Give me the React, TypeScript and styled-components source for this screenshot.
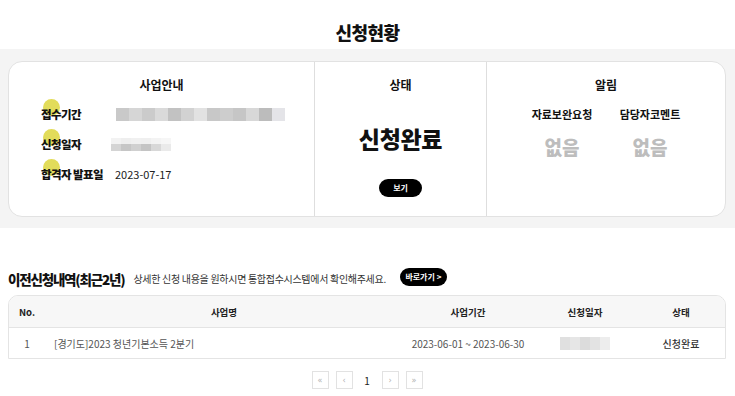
import styled, { createGlobalStyle } from "styled-components";

const GlobalStyle = createGlobalStyle`
	body {
		margin: 0;
		background: #fff;
		font-family: "Noto Sans CJK KR", "Noto Sans", sans-serif;
		color: #111;
	}
`;

const Page = styled.div`
	width: 735px;
	display: flex;
	flex-direction: column;
`;

const PageTitle = styled.h1`
	margin: 0;
	padding-top: 19px;
	height: 30px;
	text-align: center;
	font-size: 18px;
	font-weight: 800;
	line-height: 26px;
	letter-spacing: -0.5px;
`;

const Band = styled.div`
	background: #f4f4f4;
	padding: 12px 9px 11px 8px;
`;

const Card = styled.div`
	background: #fff;
	border: 1px solid #e2e2e2;
	border-radius: 14px;
	height: 154px;
	display: grid;
	grid-template-columns: 305px 172px 1fr;
`;

const Column = styled.div<{ $divider?: boolean }>`
	display: flex;
	flex-direction: column;
	align-items: center;
	padding-top: 14px;
	border-left: ${(p) => (p.$divider ? "1px solid #dedede" : "none")};
`;

const ColTitle = styled.div`
	font-size: 12px;
	font-weight: 700;
	line-height: 18px;
`;

const InfoList = styled.div`
	align-self: stretch;
	display: flex;
	flex-direction: column;
	gap: 12px;
	padding: 11px 0 0 32px;
`;

const InfoRow = styled.div`
	display: flex;
	align-items: center;
	height: 18px;
`;

const InfoLabel = styled.div`
	position: relative;
	width: 74px;
	font-size: 11.5px;
	font-weight: 800;
	line-height: 18px;
	letter-spacing: -0.6px;
	&::before {
		content: "";
		position: absolute;
		left: 2px;
		top: -6px;
		width: 17px;
		height: 17px;
		border-radius: 50%;
		background: #e2dc5a;
		z-index: 0;
	}
	span {
		position: relative;
		z-index: 1;
	}
`;

const InfoValue = styled.div`
	font-size: 11px;
	line-height: 18px;
	color: #222;
`;

const Mosaic = styled.div<{ $offset?: number }>`
	display: flex;
	flex-direction: column;
	margin-left: ${(p) => p.$offset ?? 0}px;
`;

const MosaicLine = styled.div`
	display: flex;
`;

const MosaicCell = styled.div<{ $w: number; $h: number; $c: string }>`
	width: ${(p) => p.$w}px;
	height: ${(p) => p.$h}px;
	background: ${(p) => p.$c};
`;

const BigStatus = styled.div`
	margin-top: 28px;
	font-size: 23px;
	font-weight: 800;
	line-height: 32px;
	letter-spacing: -0.3px;
`;

const PillButton = styled.button<{ $w: number }>`
	width: ${(p) => p.$w}px;
	height: 18px;
	border: none;
	border-radius: 9px;
	background: #000;
	color: #fff;
	font-family: inherit;
	font-size: 8px;
	font-weight: 700;
	padding: 0;
	line-height: 18px;
	cursor: pointer;
`;

const ViewButton = styled(PillButton)`
	margin-top: 25px;
`;

const NoticeGrid = styled.div`
	margin-top: 12px;
	display: grid;
	grid-template-columns: 88px 88px;
	justify-items: center;
	row-gap: 12px;
`;

const NoticeLabel = styled.div`
	font-size: 11px;
	font-weight: 700;
	line-height: 16px;
`;

const NoticeValue = styled.div`
	font-size: 19px;
	font-weight: 800;
	color: #bdbdbd;
	line-height: 26px;
`;

const History = styled.div`
	padding: 41px 9px 0 8px;
	display: flex;
	flex-direction: column;
`;

const HistoryHead = styled.div`
	display: flex;
	align-items: center;
	height: 20px;
`;

const HistoryTitle = styled.div`
	font-size: 13.5px;
	font-weight: 800;
	line-height: 20px;
	letter-spacing: -1.2px;
`;

const HistoryDesc = styled.div`
	margin-left: 9px;
	font-size: 10px;
	color: #333;
	line-height: 20px;
	letter-spacing: -0.3px;
`;

const GoButton = styled(PillButton)`
	margin-left: 14px;
	margin-top: -4px;
`;

const Table = styled.div`
	margin-top: 6px;
	border: 1px solid #e4e4e4;
	border-radius: 10px 10px 0 0;
	overflow: hidden;
`;

const TRow = styled.div<{ $head?: boolean }>`
	display: grid;
	grid-template-columns: 36px 358px 130px 104px 1fr;
	height: ${(p) => (p.$head ? 31 : 30)}px;
	align-items: center;
	background: ${(p) => (p.$head ? "#f7f7f7" : "#fff")};
	border-bottom: ${(p) => (p.$head ? "1px solid #e4e4e4" : "none")};
	font-size: ${(p) => (p.$head ? 9.5 : 10)}px;
	font-weight: ${(p) => (p.$head ? 700 : 400)};
	color: ${(p) => (p.$head ? "#222" : "#555")};
`;

const Cell = styled.div<{ $align?: "left" | "center"; $pad?: number; $strong?: boolean }>`
	display: flex;
	justify-content: ${(p) => (p.$align === "left" ? "flex-start" : "center")};
	padding-left: ${(p) => p.$pad ?? 0}px;
	font-weight: ${(p) => (p.$strong ? 500 : "inherit")};
	color: ${(p) => (p.$strong ? "#333" : "inherit")};
`;

const Pager = styled.div`
	display: flex;
	justify-content: center;
	align-items: center;
	gap: 7px;
	margin-top: 12px;
`;

const PageBox = styled.div`
	width: 15px;
	height: 16px;
	border: 1px solid #e2e2e2;
	display: flex;
	align-items: center;
	justify-content: center;
	font-size: 8px;
	color: #b0b0b0;
	font-family: "DejaVu Sans", sans-serif;
`;

const PageNum = styled.div`
	width: 15px;
	text-align: center;
	font-size: 10px;
	color: #222;
`;

const periodShades = ["#c9c9c9", "#d6d6d6", "#cbcbcb", "#dadada", "#c2c2c2", "#d2d2d2", "#e2e2e2", "#c8c8c8", "#cdcdcd", "#c6c6c6", "#d8d8d8", "#bcbcbc", "#e4e4e8"];
const dateTop = ["#f2f2f2", "#eeeeee", "#f0f0f0", "#efefef", "#f3f3f3", "#f6f6f6"];
const dateBottom = ["#d4d4d4", "#c6c6c6", "#d0d0d0", "#c4c4c4", "#d8d8d8", "#eaeaea"];
const rowShades = ["#e0e0e0", "#e6e6e6", "#dcdcdc", "#e3e3e3", "#ededed"];

function App() {
	return (
		<Page>
			<GlobalStyle />
			<PageTitle>신청현황</PageTitle>
			<Band>
				<Card>
					<Column>
						<ColTitle>사업안내</ColTitle>
						<InfoList>
							<InfoRow>
								<InfoLabel><span>접수기간</span></InfoLabel>
								<Mosaic $offset={1}>
									<MosaicLine>
										{periodShades.map((c, i) => (
											<MosaicCell key={i} $w={13} $h={13} $c={c} />
										))}
									</MosaicLine>
								</Mosaic>
							</InfoRow>
							<InfoRow>
								<InfoLabel><span>신청일자</span></InfoLabel>
								<Mosaic $offset={-4}>
									<MosaicLine>
										{dateTop.map((c, i) => (
											<MosaicCell key={i} $w={10} $h={6} $c={c} />
										))}
									</MosaicLine>
									<MosaicLine>
										{dateBottom.map((c, i) => (
											<MosaicCell key={i} $w={10} $h={7} $c={c} />
										))}
									</MosaicLine>
								</Mosaic>
							</InfoRow>
							<InfoRow>
								<InfoLabel><span>합격자 발표일</span></InfoLabel>
								<InfoValue>2023-07-17</InfoValue>
							</InfoRow>
						</InfoList>
					</Column>
					<Column $divider>
						<ColTitle>상태</ColTitle>
						<BigStatus>신청완료</BigStatus>
						<ViewButton $w={43}>보기</ViewButton>
					</Column>
					<Column $divider>
						<ColTitle>알림</ColTitle>
						<NoticeGrid>
							<NoticeLabel>자료보완요청</NoticeLabel>
							<NoticeLabel>담당자코멘트</NoticeLabel>
							<NoticeValue>없음</NoticeValue>
							<NoticeValue>없음</NoticeValue>
						</NoticeGrid>
					</Column>
				</Card>
			</Band>
			<History>
				<HistoryHead>
					<HistoryTitle>이전신청내역(최근2년)</HistoryTitle>
					<HistoryDesc>상세한 신청 내용을 원하시면 통합접수시스템에서 확인해주세요.</HistoryDesc>
					<GoButton $w={47}>바로가기 &gt;</GoButton>
				</HistoryHead>
				<Table>
					<TRow $head>
						<Cell>No.</Cell>
						<Cell>사업명</Cell>
						<Cell>사업기간</Cell>
						<Cell>신청일자</Cell>
						<Cell>상태</Cell>
					</TRow>
					<TRow>
						<Cell>1</Cell>
						<Cell $align="left" $pad={9}>[경기도]2023 청년기본소득 2분기</Cell>
						<Cell>2023-06-01 ~ 2023-06-30</Cell>
						<Cell>
							<MosaicLine>
								{rowShades.map((c, i) => (
									<MosaicCell key={i} $w={10} $h={13} $c={c} />
								))}
							</MosaicLine>
						</Cell>
						<Cell $strong>신청완료</Cell>
					</TRow>
				</Table>
				<Pager>
					<PageBox>«</PageBox>
					<PageBox>‹</PageBox>
					<PageNum>1</PageNum>
					<PageBox>›</PageBox>
					<PageBox>»</PageBox>
				</Pager>
			</History>
		</Page>
	);
}

export default App;
